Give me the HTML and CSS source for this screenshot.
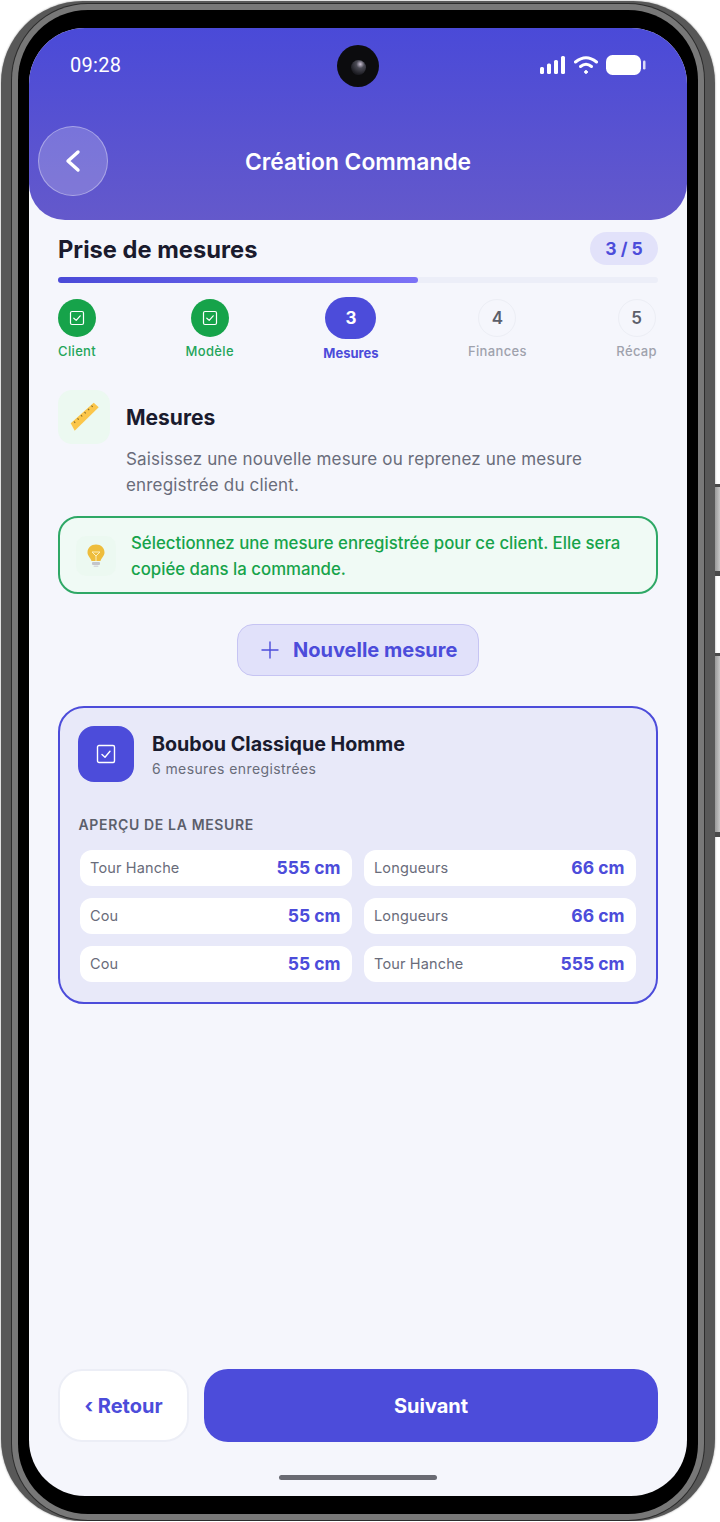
FILE: index.html
```html
<!DOCTYPE html>
<html lang="fr">
<head>
  <meta charset="UTF-8">
  <meta name="viewport" content="width=device-width, initial-scale=1">
  <title>Création Commande</title>
  <link rel="stylesheet" href="styles.css">
</head>
<body>

  <div class="phone">
    <span class="side-btn side-btn-top"></span>
    <span class="side-btn side-btn-bottom"></span>

    <div class="bezel">
      <div class="screen">
        <div class="camera"><span class="lens"></span></div>

        <header class="app-header">
          <div class="status-bar">
            <span class="time">09:28</span>
            <div class="status-icons">
              <svg width="26" height="18" viewBox="0 0 26 18" fill="#fff">
                <rect x="0" y="11" width="4" height="7" rx="1.5"/>
                <rect x="7" y="7.5" width="4" height="10.5" rx="1.5"/>
                <rect x="14" y="4" width="4" height="14" rx="1.5"/>
                <rect x="21" y="0" width="4" height="18" rx="1.5"/>
              </svg>
              <svg width="24" height="18" viewBox="0 0 24 18" fill="none" stroke="#fff" stroke-width="3" stroke-linecap="round">
                <path d="M1.5 6 Q12 -2.5 22.500 6"/>
                <path d="M6.500 10.500 Q12 6 17.500 10.500"/>
                <circle cx="12" cy="16" r="1.4" fill="#fff" stroke-width="1"/>
              </svg>
              <svg width="40" height="20" viewBox="0 0 40 20" fill="#fff">
                <rect x="0" y="0" width="35" height="20" rx="6.5"/>
                <rect x="37" y="5.5" width="2.5" height="9" rx="1.2" opacity="0.8"/>
              </svg>
            </div>
          </div>
          <div class="title-bar">
            <button class="back-btn">
              <svg width="18" height="24" viewBox="0 0 18 24" fill="none" stroke="#fff" stroke-width="3.4" stroke-linecap="round" stroke-linejoin="round">
                <path d="M14 3 L4 12 L14 21"/>
              </svg>
            </button>
            <h1>Création Commande</h1>
          </div>
        </header>

        <main class="content">
          <div class="page-head">
            <h2>Prise de mesures</h2>
            <span class="page-count">3 / 5</span>
          </div>
          <div class="progress"><div class="progress-fill" style="width: 60%"></div></div>

          <div class="steps">
            <div class="step done">
              <span class="step-dot">
                <svg width="16" height="16" viewBox="0 0 16 16" fill="none" stroke="#fff" stroke-width="1.2"><rect x="1.5" y="1.5" width="13" height="13" rx="1.5"/><path d="M4.8 8.2 L7.2 10.4 L11.2 5.8" stroke-linecap="round" stroke-linejoin="round"/></svg>
              </span>
              <span class="step-label">Client</span>
            </div>
            <div class="step done">
              <span class="step-dot">
                <svg width="16" height="16" viewBox="0 0 16 16" fill="none" stroke="#fff" stroke-width="1.2"><rect x="1.5" y="1.5" width="13" height="13" rx="1.5"/><path d="M4.8 8.2 L7.2 10.4 L11.2 5.8" stroke-linecap="round" stroke-linejoin="round"/></svg>
              </span>
              <span class="step-label">Modèle</span>
            </div>
            <div class="step current">
              <span class="step-dot">3</span>
              <span class="step-label">Mesures</span>
            </div>
            <div class="step">
              <span class="step-dot">4</span>
              <span class="step-label">Finances</span>
            </div>
            <div class="step">
              <span class="step-dot">5</span>
              <span class="step-label">Récap</span>
            </div>
          </div>

          <section class="intro">
            <div class="intro-icon">
              <svg width="34" height="34" viewBox="0 0 34 34">
                <path d="M3.700 23.300 L26.700 2.700 L31.700 7.300 L7.700 30.700 Z" fill="#fbc64a"/>
                <path d="M7 21.500 L8.200 22.800 M10.500 18.400 L11.700 19.700 M14 15.200 L15.200 16.500 M17.500 12 L18.700 13.300 M21 8.900 L22.200 10.200 M24.500 5.700 L25.700 7" stroke="#85692a" stroke-width="1.100"/>
              </svg>
            </div>
            <h3>Mesures</h3>
            <p>Saisissez une nouvelle mesure ou reprenez une mesure enregistrée du client.</p>
          </section>

          <div class="tip">
            <div class="tip-icon">
              <svg width="18" height="24" viewBox="0 0 18 24">
                <path d="M9 0.500 C4 0.500 0.500 4 0.500 8.500 C0.500 12 3.500 13.500 4.500 17 L13.500 17 C14.500 13.500 17.500 12 17.500 8.500 C17.500 4 14 0.500 9 0.500 Z" fill="#eebd3c"/>
                <path d="M5 8 L13 8 L9 12 Z M9 12 L9 17" fill="none" stroke="#fbeebb" stroke-width="1"/>
                <rect x="5" y="18" width="8" height="3" rx="1" fill="#c3c5ca"/>
                <rect x="6.500" y="21.500" width="5" height="1.500" rx="0.700" fill="#d6d8dc"/>
              </svg>
            </div>
            <p>Sélectionnez une mesure enregistrée pour ce client. Elle sera copiée dans la commande.</p>
          </div>

          <button class="new-btn">
            <svg width="18" height="18" viewBox="0 0 18 18" stroke="#4c4cda" stroke-width="1.4" stroke-linecap="round"><path d="M9 1 V17 M1 9 H17"/></svg>
            Nouvelle mesure
          </button>

          <div class="measure-card">
            <div class="measure-head">
              <div class="measure-icon">
                <svg width="20" height="20" viewBox="0 0 20 20" fill="none" stroke="#fff" stroke-width="1.4"><rect x="1.500" y="1.500" width="17" height="17" rx="1.500"/><path d="M6 10.500 L9 13.200 L14 7.200" stroke-linecap="round" stroke-linejoin="round"/></svg>
              </div>
              <div>
                <div class="measure-name">Boubou Classique Homme</div>
                <div class="measure-sub">6 mesures enregistrées</div>
              </div>
            </div>
            <div class="preview-label">APERÇU DE LA MESURE</div>
            <div class="preview-grid">
              <div class="preview-item"><span>Tour Hanche</span><strong>555 cm</strong></div>
              <div class="preview-item"><span>Longueurs</span><strong>66 cm</strong></div>
              <div class="preview-item"><span>Cou</span><strong>55 cm</strong></div>
              <div class="preview-item"><span>Longueurs</span><strong>66 cm</strong></div>
              <div class="preview-item"><span>Cou</span><strong>55 cm</strong></div>
              <div class="preview-item"><span>Tour Hanche</span><strong>555 cm</strong></div>
            </div>
          </div>
        </main>

        <footer class="actions">
          <button class="btn-back">‹ Retour</button>
          <button class="btn-next">Suivant</button>
        </footer>
        <div class="home-bar"></div>
      </div>
    </div>
  </div>

</body>
</html>
```

FILE: styles.css
```css
* {
  box-sizing: border-box;
}
body {
  margin: 0;
  background: #fff;
  font-family: "Inter", sans-serif;
  color: #1a1b2e;
}
h1, h2, h3, p {
  margin: 0;
}
button {
  font-family: inherit;
  cursor: pointer;
}

/* phone frame */
.phone {
  position: relative;
  width: 714px;
  height: 1520px;
  margin: 1px 0 0 1px;
  padding: 9px 17px 7px;
  border-radius: 82px;
  background: #585858;
  box-shadow: 0 0 2px rgba(0, 0, 0, 0.45);
}
.side-btn {
  position: absolute;
  right: -5px;
  width: 5px;
  background: linear-gradient(90deg, #999, #c6c6c6);
  border-top: 3px solid #4a4a4a;
  border-bottom: 5px solid #4a4a4a;
}
.side-btn-top {
  top: 483px;
  height: 92px;
}
.side-btn-bottom {
  top: 652px;
  height: 184px;
}
.bezel {
  height: 100%;
  padding: 18px 11px;
  background: #000;
  border-radius: 70px;
  box-shadow: 0 0 0 6px #787878, 0 0 0 7px #2c2c2c;
}
.screen {
  position: relative;
  display: flex;
  flex-direction: column;
  height: 1468px;
  overflow: hidden;
  border-radius: 56px;
  background: #f5f6fc;
}
.camera {
  position: absolute;
  top: 17px;
  left: 308px;
  width: 42px;
  height: 42px;
  border-radius: 50%;
  background: #0c0c0e;
  display: flex;
  align-items: center;
  justify-content: center;
}
.lens {
  width: 15px;
  height: 15px;
  margin-top: 3px;
  border-radius: 50%;
  background: radial-gradient(circle at 62% 28%, #c9c0d2 0, #4a4a54 28%, #1c1c22 72%);
}

/* header */
.app-header {
  height: 192px;
  background: linear-gradient(180deg, #4a4ad8, #6459cb);
  border-radius: 0 0 36px 36px;
  color: #fff;
}
.status-bar {
  display: flex;
  align-items: center;
  justify-content: space-between;
  height: 74px;
  padding: 0 41px;
}
.time {
  font-family: "Roboto", sans-serif;
  font-size: 20px;
  letter-spacing: 0.3px;
}
.status-icons {
  display: flex;
  align-items: center;
  gap: 8px;
}
.title-bar {
  display: grid;
  grid-template-columns: 70px 1fr 70px;
  align-items: center;
  margin-top: 24px;
  padding: 0 9px;
}
.back-btn {
  display: flex;
  align-items: center;
  justify-content: center;
  width: 70px;
  height: 70px;
  padding: 0;
  border: 1px solid rgba(255, 255, 255, 0.35);
  border-radius: 50%;
  background: rgba(255, 255, 255, 0.2);
}
.title-bar h1 {
  text-align: center;
  font-size: 22.8px;
  font-weight: 600;
}

/* content */
.content {
  flex: 1;
  padding: 12px 29px 0;
}
.page-head {
  display: flex;
  align-items: center;
  justify-content: space-between;
}
.page-head h2 {
  padding-top: 2px;
  font-size: 23.7px;
  font-weight: 700;
}
.page-count {
  display: flex;
  align-items: center;
  justify-content: center;
  width: 68px;
  height: 33px;
  border-radius: 17px;
  background: #e2e2fa;
  color: #4c4cda;
  font-size: 17.5px;
  font-weight: 700;
}
.progress {
  height: 6px;
  margin-top: 12px;
  border-radius: 3px;
  background: #eceef8;
}
.progress-fill {
  height: 100%;
  border-radius: 3px;
  background: linear-gradient(90deg, #4a4ad8, #7c72f6);
}

/* steps */
.steps {
  display: flex;
  justify-content: space-between;
  margin-top: 14px;
  padding-right: 1px;
}
.step {
  display: flex;
  flex-direction: column;
  align-items: center;
  padding-top: 2px;
  color: #9fa2ad;
}
.step-dot {
  display: flex;
  align-items: center;
  justify-content: center;
  width: 38px;
  height: 38px;
  border: 1px solid #eceef5;
  border-radius: 50%;
  color: #5c5f6b;
  font-size: 17px;
  font-weight: 600;
}
.step-label {
  margin-top: 6px;
  font-size: 13px;
  line-height: 16px;
  font-weight: 500;
  letter-spacing: 0.35px;
}
.step.done {
  color: #23a55a;
}
.step.done .step-dot {
  background: #16a34a;
  border: none;
}
.step.current {
  padding-top: 0;
  color: #4c4cda;
}
.step.current .step-dot {
  width: 51px;
  height: 42px;
  border: none;
  border-radius: 21px;
  background: #4c4cda;
  color: #fff;
  font-weight: 700;
}
.step.current .step-label {
  font-weight: 700;
  letter-spacing: 0;
}

/* intro */
.intro {
  display: grid;
  grid-template-columns: 52px 1fr;
  grid-template-rows: 54px auto;
  column-gap: 16px;
  margin-top: 29px;
}
.intro-icon {
  display: flex;
  align-items: center;
  justify-content: center;
  border-radius: 14px;
  background: #ecf9f1;
}
.intro h3 {
  align-self: center;
  font-size: 21px;
  font-weight: 700;
}
.intro p {
  grid-column: 2;
  margin-top: 2px;
  color: #696c7a;
  font-size: 17px;
  letter-spacing: 0.17px;
  line-height: 26px;
}

/* tip */
.tip {
  display: flex;
  align-items: center;
  gap: 15px;
  height: 78px;
  margin-top: 18px;
  padding: 2px 16px 0;
  border: 2px solid #2fa866;
  border-radius: 20px;
  background: #f0faf5;
}
.tip-icon {
  flex: none;
  display: flex;
  align-items: center;
  justify-content: center;
  width: 40px;
  height: 40px;
  border-radius: 10px;
  background: #ecf9f1;
}
.tip p {
  color: #16a34a;
  font-size: 16.8px;
  font-weight: 500;
  line-height: 26px;
}

/* new measure */
.new-btn {
  display: flex;
  align-items: center;
  gap: 14px;
  width: 242px;
  height: 52px;
  margin: 30px auto 0;
  padding: 0 0 0 23px;
  border: 1.5px solid #c6c4f3;
  border-radius: 16px;
  background: #e1e1fa;
  color: #4c4cda;
  font-size: 20px;
  font-weight: 700;
}

/* measure card */
.measure-card {
  height: 298px;
  margin-top: 30px;
  padding: 17.5px;
  border: 2.5px solid #4c4cda;
  border-radius: 26px;
  background: #e8e9f9;
}
.measure-head {
  display: flex;
  align-items: center;
  gap: 18.5px;
}
.measure-icon {
  display: flex;
  align-items: center;
  justify-content: center;
  width: 56px;
  height: 56px;
  border-radius: 16px;
  background: #4c4cda;
}
.measure-name {
  font-size: 19.7px;
  font-weight: 700;
  line-height: 26px;
}
.measure-sub {
  margin-top: 3px;
  color: #696c7a;
  font-size: 14px;
  line-height: 17px;
  letter-spacing: 0.4px;
}
.preview-label {
  margin: 34px 0 0 1px;
  color: #5c5f6b;
  font-size: 14px;
  font-weight: 600;
  line-height: 17px;
  letter-spacing: 0.65px;
}
.preview-grid {
  display: grid;
  grid-template-columns: 1fr 1fr;
  gap: 12px;
  margin: 17px 3px 0 2px;
}
.preview-item {
  display: flex;
  align-items: center;
  justify-content: space-between;
  height: 36px;
  padding: 0 11px 0 10.5px;
  border-radius: 12px;
  background: #fff;
}
.preview-item span {
  color: #696c7a;
  font-size: 14.5px;
  letter-spacing: 0.15px;
}
.preview-item strong {
  color: #4c4cda;
  font-size: 17.5px;
  font-weight: 700;
}

/* footer */
.actions {
  display: flex;
  gap: 15px;
  padding: 0 29px;
}
.btn-back,
.btn-next {
  height: 73px;
  padding-top: 2px;
  border-radius: 24px;
  font-size: 20px;
  font-weight: 700;
}
.btn-back {
  flex: none;
  width: 131px;
  border: 2px solid #eceef6;
  background: #fff;
  color: #4c4cda;
}
.btn-next {
  flex: 1;
  border: none;
  background: #4c4cda;
  color: #fff;
}
.home-bar {
  flex: none;
  width: 158px;
  height: 5px;
  margin: 33px auto 16px;
  border-radius: 3px;
  background: #6a6b73;
}
```
